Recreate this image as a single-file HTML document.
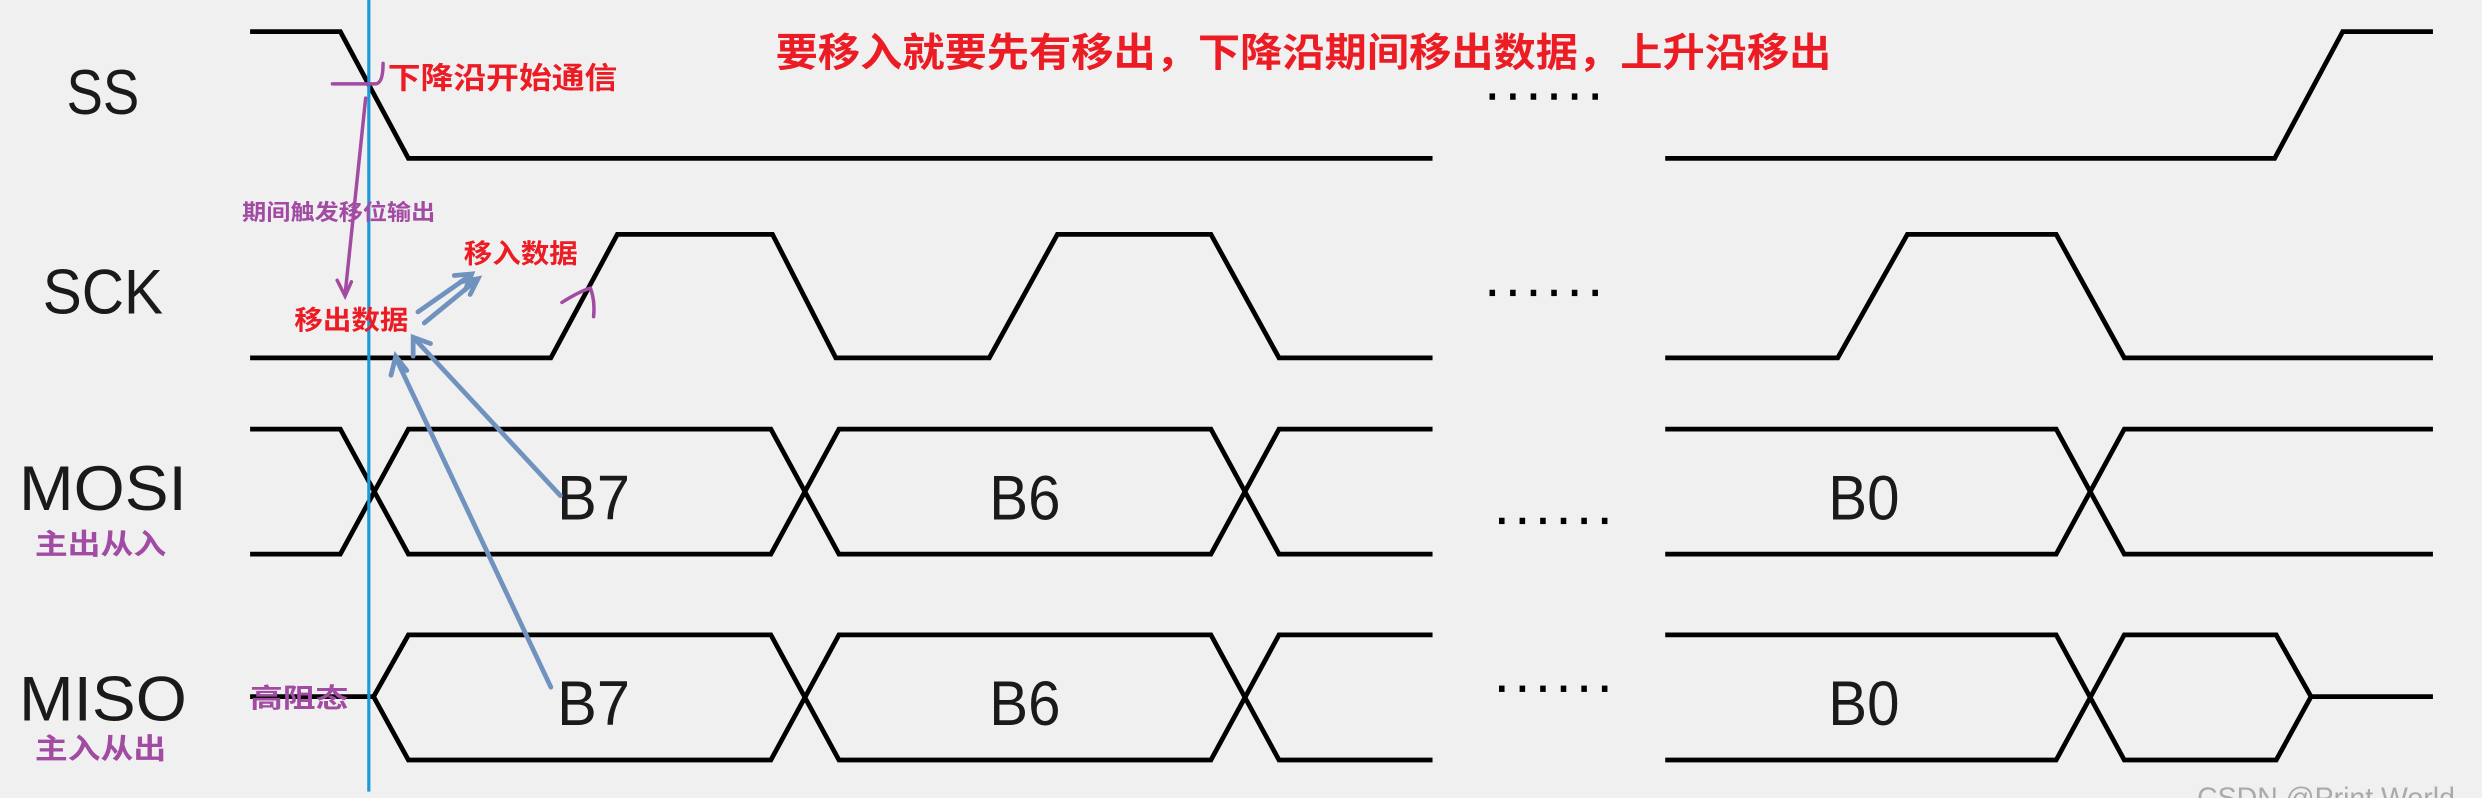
<!DOCTYPE html>
<html><head><meta charset="utf-8"><style>
html,body{margin:0;padding:0;background:#f0f0f0;overflow:hidden}
svg{display:block}
</style></head><body>
<svg width="2482" height="798" viewBox="0 0 1568 504" preserveAspectRatio="none" xmlns="http://www.w3.org/2000/svg">
<rect width="1568" height="504" fill="#f0f0f0"/>
<defs>
<g id="d"><rect x="0" y="0" width="3.5" height="4"/><rect x="13" y="0" width="3.5" height="4"/><rect x="26" y="0" width="3.5" height="4"/><rect x="39" y="0" width="3.5" height="4"/><rect x="52" y="0" width="3.5" height="4"/><rect x="65" y="0" width="3.5" height="4"/></g>
</defs>
<g fill="none" stroke="#000" stroke-width="3" stroke-linejoin="miter">
<polyline points="158,20 215,20 258,100 905,100"/>
<polyline points="1052,100 1437,100 1480,20 1537,20"/>
<polyline points="158,226 348,226 390,148 488,148 528,226 625,226 668,148 765,148 808,226 905,226"/>
<polyline points="1052,226 1161,226 1205,148 1299,148 1342,226 1537,226"/>
<polyline points="158,271 215,271 258,350 487,350 530,271 765,271 808,350 905,350"/>
<polyline points="158,350 215,350 258,271 487,271 530,350 765,350 808,271 905,271"/>
<polyline points="1052,271 1299,271 1342,350 1537,350"/>
<polyline points="1052,350 1299,350 1342,271 1537,271"/>
<polyline points="158,440 236,440"/>
<polyline points="236,440 258,401 487,401 530,480 765,480 808,401 905,401"/>
<polyline points="236,440 258,480 487,480 530,401 765,401 808,480 905,480"/>
<polyline points="1052,401 1299,401 1342,480 1438,480 1460,440 1537,440"/>
<polyline points="1052,480 1299,480 1342,401 1438,401 1460,440"/>
</g>
<g fill="#000">
<use href="#d" x="941" y="59"/>
<use href="#d" x="941" y="183"/>
<use href="#d" x="947" y="327"/>
<use href="#d" x="947" y="433"/>
</g>
<g font-family="'Liberation Sans',sans-serif" font-size="40" fill="#1a1a1a" font-weight="normal">
<text x="42" y="72" textLength="46" lengthAdjust="spacingAndGlyphs">SS</text>
<text x="27" y="198" textLength="76" lengthAdjust="spacingAndGlyphs">SCK</text>
<text x="12" y="322" textLength="106" lengthAdjust="spacingAndGlyphs">MOSI</text>
<text x="12" y="455" textLength="106" lengthAdjust="spacingAndGlyphs">MISO</text>
<text x="352" y="328" textLength="46" lengthAdjust="spacingAndGlyphs">B7</text>
<text x="352" y="458" textLength="46" lengthAdjust="spacingAndGlyphs">B7</text>
<text x="625" y="328" textLength="45" lengthAdjust="spacingAndGlyphs">B6</text>
<text x="625" y="458" textLength="45" lengthAdjust="spacingAndGlyphs">B6</text>
<text x="1155" y="328" textLength="45" lengthAdjust="spacingAndGlyphs">B0</text>
<text x="1155" y="458" textLength="45" lengthAdjust="spacingAndGlyphs">B0</text>
</g>
<line x1="233" y1="0" x2="233" y2="500" stroke="#1a9ad8" stroke-width="2"/>
<g font-family="'Liberation Sans','Noto Sans CJK SC',sans-serif" font-weight="bold">
<text x="490" y="42" font-size="25" fill="#ec1c24" textLength="667" lengthAdjust="spacingAndGlyphs">要移入就要先有移出，下降沿期间移出数据，上升沿移出</text>
<text x="245" y="56" font-size="19" fill="#ec1c24" textLength="145" lengthAdjust="spacingAndGlyphs">下降沿开始通信</text>
<text x="153" y="139" font-size="14" fill="#a14ba3" textLength="122" lengthAdjust="spacingAndGlyphs">期间触发移位输出</text>
<text x="293" y="166" font-size="17" fill="#ec1c24" textLength="72" lengthAdjust="spacingAndGlyphs">移入数据</text>
<text x="186" y="208" font-size="17" fill="#ec1c24" textLength="72" lengthAdjust="spacingAndGlyphs">移出数据</text>
<text x="158" y="447" font-size="17" fill="#a14ba3" textLength="62" lengthAdjust="spacingAndGlyphs">高阻态</text>
<text x="22" y="350" font-size="18" fill="#a14ba3" textLength="83" lengthAdjust="spacingAndGlyphs">主出从入</text>
<text x="22" y="479" font-size="18" fill="#a14ba3" textLength="83" lengthAdjust="spacingAndGlyphs">主入从出</text>
</g>
<g fill="none" stroke="#a14ba3" stroke-width="2.2" stroke-linecap="round">
<path d="M210,53 L237,53 Q242,53 242,40"/>
<path d="M231,62 L218,186"/>
<path d="M213,177 L218,187 L222,178"/>
<path d="M355,191 Q366,184 373,182 Q376,190 375,200"/>
</g>
<g fill="none" stroke="#7092be" stroke-width="3" stroke-linecap="round">
<path d="M264,197 L297,174"/>
<path d="M268,204 L301,177"/>
<path d="M287,174 L298,173 L294,183"/>
<path d="M291,178 L302,176 L297,186"/>
<path d="M354,313 L262,214"/>
<path d="M261,225 L261,213 L272,217"/>
<path d="M348,434 L250,226"/>
<path d="M247,237 L250,225 L257,234"/>
</g>
<text x="1388" y="510" font-family="'Liberation Sans',sans-serif" font-size="18" fill="#aaa">CSDN @Print World</text>
</svg>
</body></html>
